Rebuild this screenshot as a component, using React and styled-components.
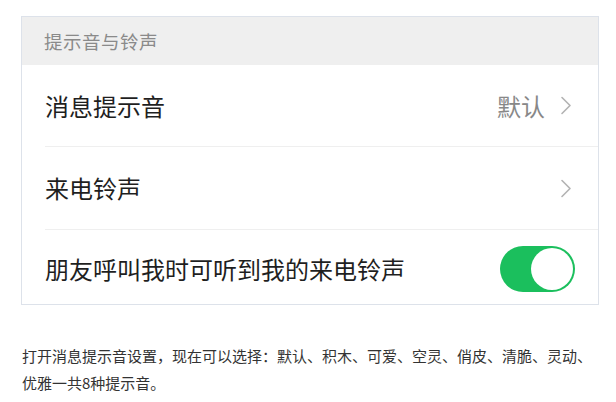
import React from "react";
import styled, { createGlobalStyle } from "styled-components";

const Global = createGlobalStyle`
  html, body { margin: 0; padding: 0; background: #ffffff; }
  body { font-family: "Noto Sans CJK SC", "Noto Sans", sans-serif; }
`;

const Page = styled.div`
  padding: 16px 0 0 21px;
  width: 578px;
`;

const Frame = styled.div`
  border: 1px solid #dde2ea;
  background: #ffffff;
  display: flex;
  flex-direction: column;
`;

const SectionHeader = styled.div`
  height: 48px;
  background: #efefef;
  display: flex;
  align-items: center;
  padding-left: 22px;
  font-size: 18.5px;
  color: #8a8a8a;
  letter-spacing: 0.5px;
`;

const Row = styled.div`
  height: ${(p) => p.$h}px;
  padding-top: ${(p) => p.$pt || 0}px;
  box-sizing: border-box;
  display: flex;
  align-items: center;
  justify-content: space-between;
  margin-left: 23px;
  padding-right: ${(p) => p.$pr}px;
  border-bottom: ${(p) => (p.$last ? "none" : "1px solid #efefef")};
`;

const Label = styled.div`
  font-size: 24px;
  color: #1f1f1f;
  line-height: 1;
`;

const Right = styled.div`
  display: flex;
  align-items: center;
  gap: 15px;
`;

const Value = styled.span`
  font-size: 24px;
  color: #888888;
  line-height: 1;
`;

const Toggle = styled.div`
  width: 75px;
  height: 46px;
  border-radius: 23px;
  background: #1bbf5d;
  display: flex;
  align-items: center;
  justify-content: flex-end;
  padding: 2px;
  box-sizing: border-box;
`;

const Knob = styled.div`
  width: 42px;
  height: 42px;
  border-radius: 50%;
  background: #ffffff;
`;

const Note = styled.p`
  margin: 37px 0 0 1px;
  font-size: 15px;
  line-height: 27px;
  color: #333333;
  width: 578px;
`;

const Chevron = () => (
  <svg width="12" height="19" viewBox="0 0 12 19">
    <path d="M2 1.5 L10 9.5 L2 17.5" fill="none" stroke="#b2b2b2" strokeWidth="1.6" strokeLinecap="round" strokeLinejoin="round" />
  </svg>
);

export default function App() {
  return (
    <>
      <Global />
      <Page>
        <Frame>
          <SectionHeader>提示音与铃声</SectionHeader>
          <Row $h={82} $pr={26}>
            <Label>消息提示音</Label>
            <Right>
              <Value>默认</Value>
              <Chevron />
            </Right>
          </Row>
          <Row $h={83} $pr={26}>
            <Label>来电铃声</Label>
            <Right>
              <Chevron />
            </Right>
          </Row>
          <Row $h={74} $pt={4} $pr={23} $last>
            <Label>朋友呼叫我时可听到我的来电铃声</Label>
            <Toggle>
              <Knob />
            </Toggle>
          </Row>
        </Frame>
        <Note>
          打开消息提示音设置，现在可以选择：默认、积木、可爱、空灵、俏皮、清脆、灵动、优雅一共8种提示音。
        </Note>
      </Page>
    </>
  );
}
